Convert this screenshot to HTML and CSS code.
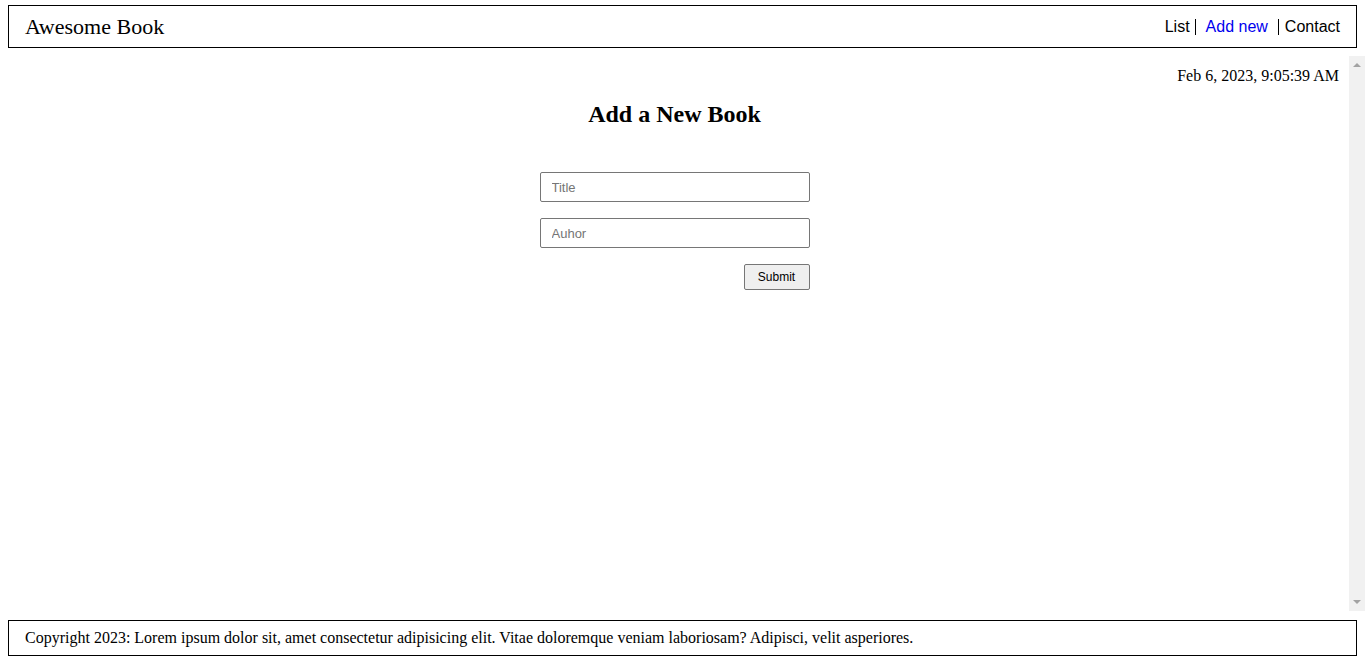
FILE: index.html
```html
<!DOCTYPE html>
<html lang="en">
<head>
<meta charset="utf-8">
<title>Awesome Book</title>
<link rel="stylesheet" href="styles.css">
</head>
<body>
  <header class="topbar">
    <h1 class="brand">Awesome Book</h1>
    <nav class="nav">
      <a class="nav-link nav-list" href="#">List</a>
      <a class="nav-link nav-add" href="#">Add new</a>
      <a class="nav-link nav-contact" href="#">Contact</a>
    </nav>
  </header>
  <div class="main">
    <main class="content">
      <p class="date">Feb 6, 2023, 9:05:39 AM</p>
      <h2 class="heading">Add a New Book</h2>
      <form class="book-form">
        <input class="field" type="text" placeholder="Title">
        <input class="field" type="text" placeholder="Auhor">
        <button class="submit" type="button">Submit</button>
      </form>
    </main>
    <div class="scrollbar" aria-hidden="true">
      <span class="arrow arrow-up"></span>
      <span class="arrow arrow-down"></span>
    </div>
  </div>
  <footer class="footer">
    <p class="copy">Copyright 2023: Lorem ipsum dolor sit, amet consectetur adipisicing elit. Vitae doloremque veniam laboriosam? Adipisci, velit asperiores.</p>
  </footer>
</body>
</html>
```

FILE: styles.css
```css
html, body {
  margin: 0;
  padding: 0;
  height: 100%;
  background: #fff;
}

body {
  display: flex;
  flex-direction: column;
  font-family: "Liberation Serif", "Times New Roman", serif;
  color: #000;
  overflow: hidden;
}

.topbar {
  flex: none;
  height: 43px;
  box-sizing: border-box;
  margin: 5px 8px 0;
  border: 1px solid #000;
  padding: 0 16px 0 16px;
  display: flex;
  align-items: center;
  justify-content: space-between;
}

.brand {
  margin: 0;
  font-size: 22px;
  font-weight: normal;
  line-height: 26px;
}

.nav {
  display: flex;
  align-items: center;
  gap: 10px;
  font-family: "Liberation Sans", Arial, sans-serif;
  font-size: 16px;
  line-height: 16px;
  padding-top: 1px;
}

.nav-link {
  color: #000;
  text-decoration: none;
}

.nav-list {
  padding-right: 5px;
  border-right: 1px solid #000;
}

.nav-add {
  color: #0000ee;
}

.nav-contact {
  padding-left: 6px;
  border-left: 1px solid #000;
}

.main {
  flex: 1;
  min-height: 0;
  margin-top: 8px;
  display: flex;
}

.content {
  flex: 1;
  min-width: 0;
  overflow: hidden;
  display: flex;
  flex-direction: column;
  align-items: center;
}

.scrollbar {
  flex: none;
  width: 16px;
  background: #f1f1f1;
  display: flex;
  flex-direction: column;
  justify-content: space-between;
  align-items: center;
  padding: 7px 0;
  box-sizing: border-box;
}

.arrow {
  display: block;
  width: 0;
  height: 0;
  border-left: 4px solid transparent;
  border-right: 4px solid transparent;
}

.arrow-up {
  border-bottom: 4px solid #a3a3a3;
}

.arrow-down {
  border-top: 4px solid #a3a3a3;
}

.date {
  align-self: stretch;
  margin: 11px 0 0;
  padding-right: 10px;
  text-align: right;
  font-size: 16px;
  line-height: 18px;
}

.heading {
  margin: 15px 0 0;
  font-size: 24px;
  font-weight: bold;
  line-height: 28px;
}

.book-form {
  margin-top: 44px;
  width: 270px;
  display: flex;
  flex-direction: column;
  gap: 16px;
}

.field {
  box-sizing: border-box;
  width: 270px;
  height: 30px;
  margin: 0;
  padding: 0 11px;
  border: 1px solid #767676;
  border-radius: 2px;
  font-family: "Liberation Sans", Arial, sans-serif;
  font-size: 13px;
  background: #fff;
}

.field::placeholder {
  color: #757575;
}

.submit {
  align-self: flex-end;
  box-sizing: border-box;
  width: 66px;
  height: 26px;
  margin: 0;
  padding: 0;
  border: 1px solid #767676;
  border-radius: 2px;
  background: #efefef;
  color: #000;
  font-family: "Liberation Sans", Arial, sans-serif;
  font-size: 12px;
}

.footer {
  flex: none;
  height: 36px;
  box-sizing: border-box;
  margin: 9px 8px 8px;
  border: 1px solid #000;
  padding: 0 16px;
  display: flex;
  align-items: center;
}

.copy {
  margin: 0;
  font-size: 16px;
  line-height: 18px;
}
```
